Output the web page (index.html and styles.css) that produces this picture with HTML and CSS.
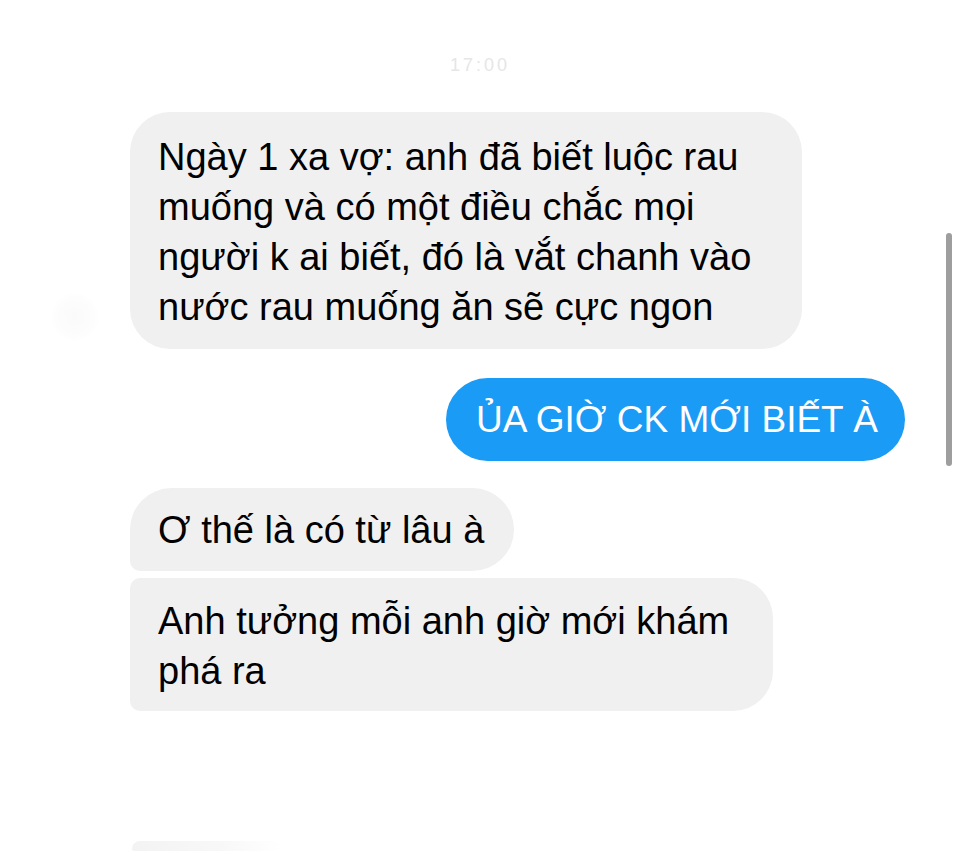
FILE: index.html
```html
<!DOCTYPE html>
<html lang="vi">
<head>
<meta charset="utf-8">
<link rel="stylesheet" href="styles.css">
</head>
<body>
<div class="screen">
  <div class="time">17:00</div>
  <div class="thread">
    <div class="row in">
      <div class="avatar"></div>
      <div class="bubble gray b1">Ngày 1 xa vợ: anh đã biết luộc rau<br>muống và có một điều chắc mọi<br>người k ai biết, đó là vắt chanh vào<br>nước rau muống ăn sẽ cực ngon</div>
    </div>
    <div class="row out">
      <div class="bubble blue">ỦA GIỜ CK MỚI BIẾT À</div>
    </div>
    <div class="group">
      <div class="bubble gray b3 first">Ơ thế là có từ lâu à</div>
      <div class="bubble gray b4 last">Anh tưởng mỗi anh giờ mới khám<br>phá ra</div>
    </div>
    <div class="ghost"></div>
  </div>
  <div class="scrollbar"></div>
</div>
</body>
</html>
```
FILE: styles.css
```css
html, body {
  margin: 0;
  padding: 0;
  background: #ffffff;
}
.screen {
  position: relative;
  width: 960px;
  height: 852px;
  overflow: hidden;
  font-family: "Liberation Sans", Arial, sans-serif;
  color: #000000;
}
.time {
  height: 22px;
  margin-top: 54px;
  text-align: center;
  font-size: 18px;
  line-height: 22px;
  color: #e6e6e6;
  letter-spacing: 3px;
}
.thread {
  display: flex;
  flex-direction: column;
  padding-top: 36px;
}
.row {
  display: flex;
}
.row.in {
  position: relative;
}
.avatar {
  position: absolute;
  left: 50px;
  top: 180px;
  width: 50px;
  height: 50px;
  border-radius: 50%;
  background: radial-gradient(circle, #fafafa 0%, #fdfdfd 55%, #ffffff 70%);
}
.bubble {
  box-sizing: border-box;
  font-size: 38px;
  line-height: 50px;
}
.gray {
  background: #f0f0f0;
  margin-left: 130px;
}
.b1 {
  width: 672px;
  height: 237px;
  padding: 20px 0 0 28px;
  border-radius: 40px;
}
.row.out {
  justify-content: flex-end;
  margin-top: 29px;
  padding-right: 55px;
}
.blue {
  background: #1a9bf5;
  color: #ffffff;
  width: 459px;
  height: 83px;
  border-radius: 42px;
  padding: 17px 0 0 30px;
  font-size: 37px;
  white-space: nowrap;
}
.group {
  display: flex;
  flex-direction: column;
  gap: 7px;
  margin-top: 27px;
}
.b3 {
  width: 384px;
  height: 83px;
  padding: 17px 0 0 28px;
  border-radius: 42px 42px 42px 10px;
}
.b4 {
  width: 643px;
  height: 133px;
  padding: 18px 0 0 28px;
  border-radius: 10px 40px 40px 10px;
}
.ghost {
  margin: 130px 0 0 132px;
  width: 150px;
  height: 10px;
  background: linear-gradient(90deg, #f3f3f3, #f8f8f8 60%, #ffffff);
  border-radius: 8px 2px 2px 2px;
}
.scrollbar {
  position: absolute;
  left: 946px;
  top: 233px;
  width: 6px;
  height: 233px;
  border-radius: 3px;
  background: #9e9e9e;
}
```
